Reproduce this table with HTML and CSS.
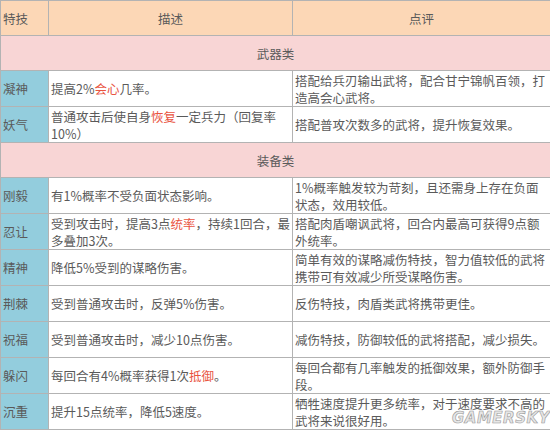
FILE: index.html
```html
<!DOCTYPE html>
<html lang="zh">
<head>
<meta charset="utf-8">
<link rel="stylesheet" href="styles.css">
</head>
<body>
<div class="wrap">
<table class="skills">
  <colgroup>
    <col class="c1">
    <col class="c2">
    <col class="c3">
  </colgroup>
  <tr class="head">
    <td class="left">特技</td>
    <td class="center">描述</td>
    <td class="center">点评</td>
  </tr>
  <tr class="section">
    <td colspan="3">武器类</td>
  </tr>
  <tr>
    <td class="name">凝神</td>
    <td>提高2%<span class="hl">会心</span>几率。</td>
    <td>搭配给兵刃输出武将，配合甘宁锦帆百领，打造高会心武将。</td>
  </tr>
  <tr>
    <td class="name">妖气</td>
    <td>普通攻击后使自身<span class="hl">恢复</span>一定兵力（回复率10%）</td>
    <td>搭配普攻次数多的武将，提升恢复效果。</td>
  </tr>
  <tr class="section">
    <td colspan="3">装备类</td>
  </tr>
  <tr>
    <td class="name">刚毅</td>
    <td>有1%概率不受负面状态影响。</td>
    <td>1%概率触发较为苛刻，且还需身上存在负面状态，效用较低。</td>
  </tr>
  <tr>
    <td class="name">忍让</td>
    <td>受到攻击时，提高3点<span class="hl">统率</span>，持续1回合，最多叠加3次。</td>
    <td>搭配肉盾嘲讽武将，回合内最高可获得9点额外统率。</td>
  </tr>
  <tr>
    <td class="name">精神</td>
    <td>降低5%受到的谋略伤害。</td>
    <td>简单有效的谋略减伤特技，智力值较低的武将携带可有效减少所受谋略伤害。</td>
  </tr>
  <tr>
    <td class="name">荆棘</td>
    <td>受到普通攻击时，反弹5%伤害。</td>
    <td>反伤特技，肉盾类武将携带更佳。</td>
  </tr>
  <tr>
    <td class="name">祝福</td>
    <td>受到普通攻击时，减少10点伤害。</td>
    <td>减伤特技，防御较低的武将搭配，减少损失。</td>
  </tr>
  <tr>
    <td class="name">躲闪</td>
    <td>每回合有4%概率获得1次<span class="hl">抵御</span>。</td>
    <td>每回合都有几率触发的抵御效果，额外防御手段。</td>
  </tr>
  <tr>
    <td class="name">沉重</td>
    <td>提升15点统率，降低5速度。</td>
    <td>牺牲速度提升更多统率，对于速度要求不高的武将来说很好用。</td>
  </tr>
</table>
<div class="watermark">GAMERSKY</div>
</div>
</body>
</html>
```

FILE: styles.css
```css
html, body {
  margin: 0;
  padding: 0;
  background: #ffffff;
}

.wrap {
  position: relative;
  width: 550px;
}

.skills {
  border-collapse: collapse;
  table-layout: fixed;
  width: 550px;
  font-family: "Noto Sans CJK SC", sans-serif;
  font-size: 12.5px;
  color: #5a5a5a;
}

.c1 { width: 48px; }
.c2 { width: 244px; }
.c3 { width: 258px; }

.skills td {
  border: 1px solid #b3b3b3;
  height: 35px;
  padding: 0 2px;
  line-height: 17px;
  vertical-align: middle;
  text-align: left;
}

.head td {
  background: #fcd7b6;
  height: 34px;
}

.head td.center {
  text-align: center;
}

.section td {
  background: #f8d5d5;
  text-align: center;
  height: 34px;
}

.skills td.name {
  background: #93cddd;
}

.hl {
  color: #e9543f;
}

.watermark {
  position: absolute;
  left: 452px;
  top: 409px;
  font-family: "DejaVu Sans", sans-serif;
  font-weight: bold;
  font-style: italic;
  font-size: 15px;
  letter-spacing: 0.5px;
  color: #e6e6e6;
  -webkit-text-stroke: 0.6px #9a9a9a;
}
```
